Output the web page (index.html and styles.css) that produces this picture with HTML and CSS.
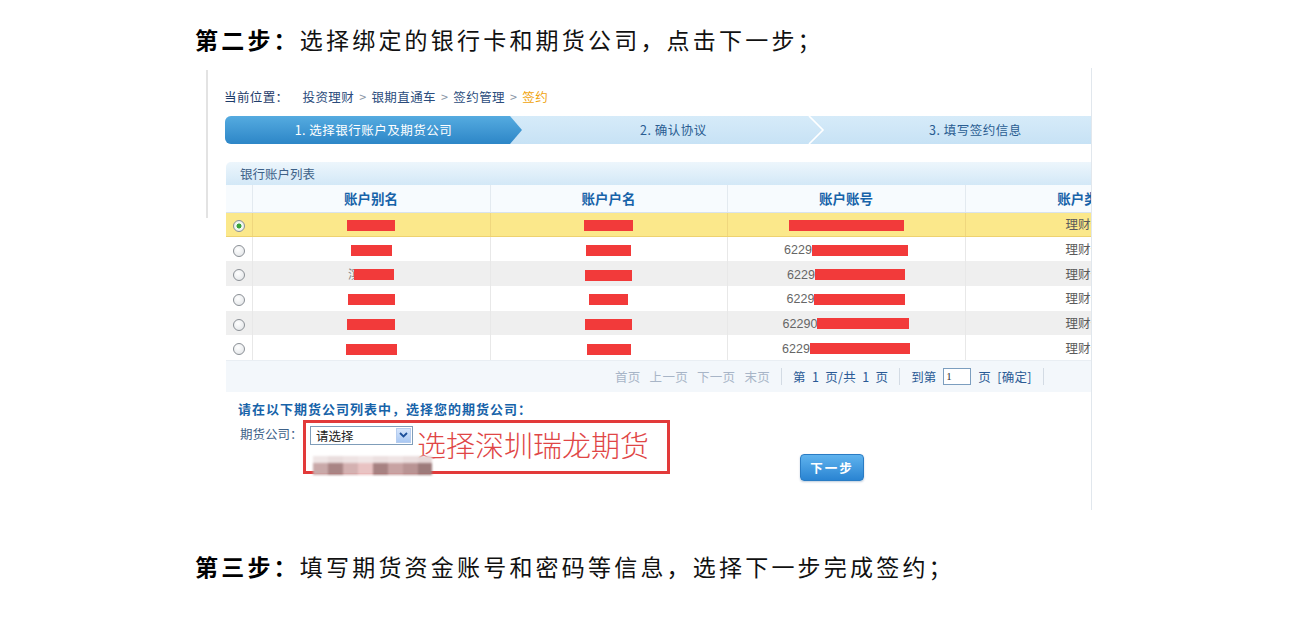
FILE: index.html
```html
<!DOCTYPE html>
<html lang="zh-CN">
<head>
<meta charset="utf-8">
<title>签约</title>
<link rel="stylesheet" href="styles.css">
</head>
<body>
<div class="doc">
  <p class="step-title"><b>第二步：</b>选择绑定的银行卡和期货公司，点击下一步；</p>
  <div class="shot">
    <div class="edge"></div>
    <div class="app">
      <div class="crumb">
        <span class="crumb-label">当前位置：</span>
        <span>投资理财</span><span class="gt">&gt;</span><span>银期直通车</span><span class="gt">&gt;</span><span>签约管理</span><span class="gt">&gt;</span><span class="crumb-cur">签约</span>
      </div>
      <div class="steps">
        <div class="step step-active">1. 选择银行账户及期货公司</div>
        <div class="step step-2">2. 确认协议</div>
        <svg class="chev" viewBox="0 0 17 28" width="17" height="28"><polyline points="1,0 15,14 1,28" fill="none" stroke="#ffffff" stroke-width="1.6"/></svg>
        <div class="step step-3">3. 填写签约信息</div>
      </div>
      <div class="panel">
        <div class="panel-title">银行账户列表</div>
        <table class="grid">
          <colgroup><col class="c0"><col class="c1"><col class="c2"><col class="c3"><col class="c4"></colgroup>
          <thead>
            <tr><th></th><th>账户别名</th><th>账户户名</th><th>账户账号</th><th>账户类型</th></tr>
          </thead>
          <tbody>
            <tr class="sel"><td><span class="radio on"></span></td><td><span class="red" style="width:48px"></span></td><td><span class="red" style="width:49px"></span></td><td><span class="red" style="width:115px"></span></td><td>理财卡</td></tr>
            <tr><td><span class="radio"></span></td><td><span class="red" style="width:41px"></span></td><td><span class="red" style="width:45px"></span></td><td><span class="num">6229</span><span class="red" style="width:96px"></span></td><td>理财卡</td></tr>
            <tr class="alt"><td><span class="radio"></span></td><td><span class="peek">滨</span><span class="red" style="width:40px"></span></td><td><span class="red" style="width:47px"></span></td><td><span class="num">6229</span><span class="red" style="width:90px"></span></td><td>理财卡</td></tr>
            <tr><td><span class="radio"></span></td><td><span class="red" style="width:47px"></span></td><td><span class="red" style="width:39px"></span></td><td><span class="num">6229</span><span class="red" style="width:91px"></span></td><td>理财卡</td></tr>
            <tr class="alt"><td><span class="radio"></span></td><td><span class="red" style="width:48px"></span></td><td><span class="red" style="width:47px"></span></td><td><span class="num">62290</span><span class="red" style="width:92px"></span></td><td>理财卡</td></tr>
            <tr><td><span class="radio"></span></td><td><span class="red" style="width:51px"></span></td><td><span class="red" style="width:44px"></span></td><td><span class="num">6229</span><span class="red" style="width:100px"></span></td><td>理财卡</td></tr>
          </tbody>
        </table>
        <div class="pager">
          <span class="off">首页</span><span class="off">上一页</span><span class="off">下一页</span><span class="off last">末页</span>
          <span class="sep"></span>
          <span class="wide">第 1 页/共 1 页</span>
          <span class="sep"></span>
          <span>到第</span><span class="page-input">1</span><span class="wide">页 [确定]</span>
          <span class="sep"></span>
        </div>
      </div>
      <div class="pick-title">请在以下期货公司列表中，选择您的期货公司：</div>
      <div class="pick-row">
        <span class="pick-label">期货公司：</span>
        <div class="note">
          <div class="select"><span>请选择</span><span class="select-btn"><svg viewBox="0 0 9 6" width="9" height="6"><polyline points="1,1 4.5,4.5 8,1" fill="none" stroke="#1c4f9a" stroke-width="1.8"/></svg></span></div>
          <span class="note-text">选择深圳瑞龙期货</span>
          <div class="mosaic">
            <span class="m m1"></span><span class="m m2"></span><span class="m m3"></span><span class="m m4"></span><span class="m m5"></span><span class="m m6"></span><span class="m m7"></span><span class="m m8"></span>
          </div>
        </div>
        <button class="next" type="button">下一步</button>
      </div>
    </div>
  </div>
  <p class="step-title step-title-2"><b>第三步：</b>填写期货资金账号和密码等信息，选择下一步完成签约；</p>
</div>
</body>
</html>
```

FILE: styles.css
```css
html, body {
  margin: 0;
  background: #ffffff;
}
body {
  font-family: "Noto Sans CJK SC", "Liberation Sans", sans-serif;
  color: #000;
}
.doc {
  padding: 24px 0 0 195px;
}
.step-title {
  margin: 0;
  font-size: 23px;
  line-height: 30px;
  letter-spacing: 3.2px;
  white-space: nowrap;
  color: #111;
  font-weight: 400;
}
.step-title b {
  font-weight: 700;
  color: #000;
}
.step-title-2 {
  margin-top: 41px;
}

/* embedded screenshot */
.shot {
  display: flex;
  width: 886px;
  height: 442px;
  margin: 14px 0 0 10px;
  border-right: 1px solid #e1e7ed;
}
.edge {
  flex: none;
  width: 2px;
  height: 148px;
  margin: 2px 0 0 1px;
  background: #e3e3e3;
}
.app {
  flex: 1;
  min-width: 0;
  overflow: hidden;
  margin-left: 17px;
}
.crumb {
  padding-top: 21px;
  margin-left: -1px;
  height: 16px;
  line-height: 16px;
  font-size: 12.5px;
  letter-spacing: 0.4px;
  color: #2b4c7c;
  white-space: nowrap;
  display: flex;
}
.crumb-label {
  color: #1e3c6a;
  margin-right: 14px;
}
.gt {
  color: #8a96a6;
  margin: 0 5px;
}
.crumb-cur {
  color: #f0a30c;
}

/* step bar */
.steps {
  display: flex;
  width: 900px;
  height: 28px;
  margin-top: 11px;
  background: linear-gradient(#d6ebf9, #c7e2f5);
  border-radius: 6px 0 0 6px;
  font-size: 12.5px;
  letter-spacing: 0.5px;
  line-height: 28px;
  white-space: nowrap;
}
.step {
  flex: none;
  box-sizing: border-box;
  color: #2a5d92;
}
.step-active {
  width: 297px;
  text-align: center;
  color: #ffffff;
  background: linear-gradient(#55abe0, #2d86c7);
  border-radius: 6px 0 0 6px;
  clip-path: polygon(0 0, calc(100% - 12px) 0, 100% 50%, calc(100% - 12px) 100%, 0 100%);
}
.step-2 {
  width: 286px;
  padding-left: 118px;
}
.chev {
  flex: none;
  display: block;
}
.step-3 {
  padding-left: 104px;
}

/* account panel */
.panel {
  width: 977px;
  margin: 18px 0 0 1px;
}
.panel-title {
  height: 23px;
  line-height: 23px;
  padding-left: 14px;
  font-size: 12.5px;
  color: #3d6188;
  background: linear-gradient(#edf6fc, #d3e8f7);
  border-radius: 5px 0 0 0;
}
.grid {
  table-layout: fixed;
  border-collapse: collapse;
  width: 977px;
}
.grid .c0 { width: 26px; }
.grid .c1 { width: 238px; }
.grid .c2 { width: 237px; }
.grid .c3 { width: 238px; }
.grid .c4 { width: 238px; }
.grid thead tr {
  height: 27px;
}
.grid th {
  padding: 0;
  font-size: 13.5px;
  font-weight: 700;
  color: #1763a9;
  background: #f7fbfe;
  border-left: 1px solid #e3eaf0;
  border-bottom: 1px solid #d9e3ec;
  white-space: nowrap;
}
.grid th:first-child {
  border-left: 0;
}
.grid tbody tr {
  height: 24.67px;
}
.grid td {
  padding: 0;
  text-align: center;
  font-size: 12.5px;
  color: #5a5a5a;
  background: #ffffff;
  border-left: 1px solid #e8e8e8;
  white-space: nowrap;
  line-height: 16px;
}
.grid td:first-child {
  border-left: 0;
}
.grid tr.alt td {
  background: #efefef;
}
.grid tr.sel td {
  background: #fbe88b;
  border-top: 1px solid #eed270;
  border-bottom: 1px solid #eed270;
  border-left-color: #efd77e;
}
.radio {
  display: inline-block;
  width: 10px;
  height: 10px;
  border: 1px solid #8b9096;
  border-radius: 50%;
  background: radial-gradient(circle at 40% 35%, #ffffff, #dfe2e5);
  vertical-align: middle;
}
.radio.on {
  background: radial-gradient(circle, #3aa43a 0, #3aa43a 2.2px, #f4fbf4 2.8px, #dfe4df 100%);
}
.red {
  display: inline-block;
  height: 11px;
  background: #f23a3a;
  vertical-align: middle;
}
.num {
  font-family: "Liberation Sans", sans-serif;
  color: #666;
  vertical-align: middle;
}
.peek {
  color: #888;
  vertical-align: middle;
  display: inline-block;
  width: 6px;
  overflow: hidden;
}

/* pager */
.pager {
  display: flex;
  align-items: center;
  height: 31px;
  padding-left: 389px;
  background: #f3f7fb;
  border-top: 1px solid #e9eef3;
  font-size: 12.5px;
  color: #2a5a95;
  white-space: nowrap;
}
.pager .off {
  color: #a8b5c7;
  margin-right: 9px;
  letter-spacing: 0.3px;
}
.pager .off.last {
  margin-right: 0;
}
.pager .wide {
  word-spacing: 3px;
  letter-spacing: 0.3px;
}
.sep {
  width: 1px;
  height: 17px;
  background: #d3dbe4;
  margin: 0 11px;
}
.page-input {
  box-sizing: border-box;
  width: 28px;
  height: 17px;
  margin: 0 7px;
  padding-left: 2px;
  border: 1px solid #7c9ebf;
  background: #ffffff;
  color: #333;
  font-family: "Liberation Serif", serif;
  font-size: 11px;
  line-height: 15px;
}

/* futures company picker */
.pick-title {
  margin-top: 9px;
  padding-left: 13px;
  line-height: 16px;
  font-size: 13px;
  font-weight: 700;
  letter-spacing: 1px;
  color: #1763a9;
  white-space: nowrap;
}
.pick-row {
  display: flex;
  align-items: flex-start;
  margin-top: 3px;
  padding-left: 15px;
}
.pick-label {
  margin-top: 6px;
  width: 63px;
  flex: none;
  font-size: 12.5px;
  line-height: 16px;
  color: #3d6188;
  white-space: nowrap;
}
.note {
  position: relative;
  flex: none;
  display: flex;
  align-items: flex-start;
  box-sizing: border-box;
  width: 367px;
  height: 54px;
  padding: 3px 0 0 4px;
  border: 3px solid #e23a3a;
}
.select {
  flex: none;
  display: flex;
  align-items: center;
  justify-content: space-between;
  box-sizing: border-box;
  width: 103px;
  height: 19px;
  padding-left: 5px;
  border: 1px solid #7f9db9;
  background: #ffffff;
  font-size: 12.5px;
  color: #222;
}
.select-btn {
  display: flex;
  align-items: center;
  justify-content: center;
  box-sizing: border-box;
  width: 15px;
  height: 15px;
  margin-right: 1px;
  border: 1px solid #b6cdef;
  background: linear-gradient(#d6e5fb, #a9c8f3);
}
.note-text {
  margin: 2px 0 0 4px;
  font-size: 29px;
  line-height: 32px;
  font-weight: 300;
  color: #e04646;
  white-space: nowrap;
}
.mosaic {
  position: absolute;
  left: 7px;
  top: 33px;
  display: flex;
  height: 19px;
  filter: blur(1px);
}
.m {
  display: block;
  width: 15px;
  height: 19px;
}
.m1 { background: linear-gradient(#efe6e6 0 35%, #c9a9a9 35%); }
.m2 { background: linear-gradient(#e9dddd 0 35%, #a98585 35%); }
.m3 { background: linear-gradient(#eee3e3 0 35%, #d4b1b1 35%); }
.m4 { background: linear-gradient(#f1e7e7 0 35%, #e9c3c3 35%); }
.m5 { background: linear-gradient(#ece0e0 0 35%, #a78282 35%); }
.m6 { background: linear-gradient(#efe4e4 0 35%, #c8a3a3 35%); }
.m7 { background: linear-gradient(#ebdede 0 35%, #b99494 35%); }
.m8 { background: linear-gradient(#e6d8d8 0 35%, #9d7b7b 35%); width: 14px; }
.next {
  flex: none;
  width: 64px;
  height: 27px;
  margin: 34px 0 0 130px;
  padding: 0;
  border: 1px solid #2a7cc4;
  border-radius: 4px;
  background: linear-gradient(#5fb3ee, #2a84d2);
  color: #ffffff;
  font-family: "Noto Sans CJK SC", sans-serif;
  font-size: 12.5px;
  font-weight: 700;
  letter-spacing: 2px;
  box-shadow: 0 1px 2px rgba(0, 60, 120, 0.25);
}
```
